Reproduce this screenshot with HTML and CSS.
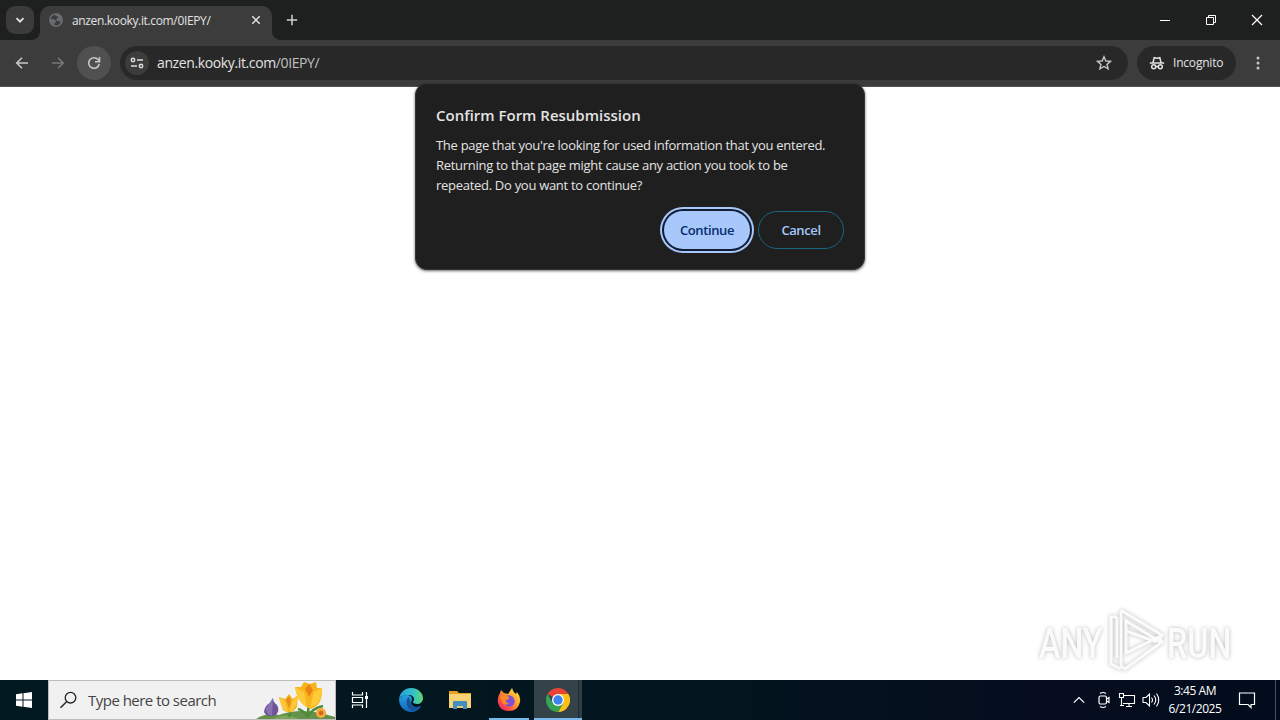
FILE: index.html
```html
<!DOCTYPE html>
<html lang="en">
<head>
    <meta charset="UTF-8">
    <meta name="viewport" content="width=device-width, initial-scale=1.0">
    <title>anzen.kooky.it.com/0IEPY/</title>
    <link rel="stylesheet" href="styles.css">
</head>
<body>
    <header class="tab-strip">
        <button class="tab-search">
            <svg width="10" height="10" viewBox="0 0 10 10"><path d="M1.5 3.2 5 6.7 8.5 3.2" fill="none" stroke="#e3e3e3" stroke-width="1.8"/></svg>
        </button>
        <div class="tab">
            <svg class="globe" width="14" height="14" viewBox="0 0 14 14">
                <circle cx="7" cy="7" r="6.2" fill="#3c3c3c" stroke="#686c72" stroke-width="1.5"/>
                <path d="M1 6h4l2 2v1.5H5.5V13C3 12.5 1 10 1 6zM7 1l4 1 2 4-1 4-2-2H8L7 6l2-1V3.500L6 3z" fill="#686c72"/>
            </svg>
            <span class="tab-title">anzen.kooky.it.com/0IEPY/</span>
            <svg class="tab-close" width="10" height="10" viewBox="0 0 10 10"><path d="M1.3 1.3 8.7 8.7M8.7 1.3 1.3 8.7" stroke="#e3e3e3" stroke-width="1.5"/></svg>
        </div>
        <svg class="new-tab" width="12" height="12" viewBox="0 0 12 12"><path d="M6 .8v10.4M.8 6h10.400" stroke="#d0d0d0" stroke-width="1.5"/></svg>
        <div class="window-controls">
            <span><svg width="12" height="12" viewBox="0 0 12 12"><path d="M1 6.500h10" stroke="#fff"/></svg></span>
            <span><svg width="12" height="12" viewBox="0 0 12 12"><path d="M1.500 3.500h7v7h-7zM3.500 3.500v-2h7v7h-2" fill="none" stroke="#fff"/></svg></span>
            <span><svg width="12" height="12" viewBox="0 0 12 12"><path d="M1 1l10 10M11 1 1 11" stroke="#fff" stroke-width="1.2"/></svg></span>
        </div>
    </header>
    <nav class="toolbar">
        <button class="nav-button">
            <svg width="14" height="14" viewBox="0 0 14 14"><path d="M13 7H2M7 1.700 1.700 7 7 12.300" fill="none" stroke="#c7c7c7" stroke-width="1.6"/></svg>
        </button>
        <button class="nav-button">
            <svg width="14" height="14" viewBox="0 0 14 14"><path d="M1 7h11M7 1.700 12.300 7 7 12.300" fill="none" stroke="#777" stroke-width="1.6"/></svg>
        </button>
        <button class="nav-button reload">
            <svg width="14" height="14" viewBox="0 0 14 14"><path d="M12.200 8A5.300 5.300 0 1 1 11 3.500L12.400 5" fill="none" stroke="#c7c7c7" stroke-width="1.6"/><path d="M12.500 1v4.700H8" fill="none" stroke="#c7c7c7" stroke-width="1.6"/></svg>
        </button>
        <div class="omnibox">
            <span class="site-info">
                <svg width="14" height="12" viewBox="0 0 14 12"><g fill="none" stroke="#dcdcdc" stroke-width="1.5"><circle cx="3" cy="3" r="1.7"/><path d="M7 3h6M1 9h6"/><circle cx="11" cy="9" r="1.7"/></g></svg>
            </span>
            <span class="url">anzen.kooky.it.com<span class="path">/0IEPY/</span></span>
            <svg class="star" width="16" height="16" viewBox="0 0 16 16"><path d="M8 1.800l1.900 4.200 4.600.4-3.500 3 1.100 4.500L8 11.500l-4.100 2.400L5 9.400l-3.500-3 4.600-.4z" fill="none" stroke="#c7c7c7" stroke-width="1.4"/></svg>
        </div>
        <div class="incognito">
            <svg width="16" height="14" viewBox="0 0 16 14">
                <g fill="none" stroke="#e3e3e3" stroke-width="1.5"><path d="M4 6.500 5.200 1.700l2.800.6 2.800-.6L12 6.500M.8 7h14.400"/><circle cx="4.700" cy="10.800" r="2"/><circle cx="11.300" cy="10.800" r="2"/><path d="M6.700 10.500h2.600"/></g>
            </svg>
            <span>Incognito</span>
        </div>
        <svg class="menu-dots" width="4" height="14" viewBox="0 0 4 14"><g fill="#c7c7c7"><circle cx="2" cy="2" r="1.5"/><circle cx="2" cy="7" r="1.5"/><circle cx="2" cy="12" r="1.5"/></g></svg>
    </nav>

    <main class="page">
        <div class="watermark">
            <svg width="210" height="80" viewBox="0 0 210 80">
                <g class="mark-text">
                    <text transform="translate(9 58) scale(.75 1)">ANY</text>
                    <text transform="translate(137 58) scale(.75 1)">RUN</text>
                </g>
                <g class="mark-play">
                    <path d="M92 11 132 35 129 41 96 21V53L129 37 132 42 95 69 91 66V12z"/>
                    <path d="M87 17H81V64L91 69M87 17V58M96 31 127 42"/>
                </g>
            </svg>
        </div>
    </main>

    <section class="dialog">
        <h1>Confirm Form Resubmission</h1>
        <p>The page that you're looking for used information that you entered.<br>
            Returning to that page might cause any action you took to be<br>
            repeated. Do you want to continue?</p>
        <div class="dialog-buttons">
            <button class="continue">Continue</button>
            <button class="cancel">Cancel</button>
        </div>
    </section>

    <footer class="taskbar">
        <div class="start">
            <svg width="16" height="16" viewBox="0 0 16 16"><path d="M0 2.300 6.500 1.300V7.500H0zM7.500 1.200 16 0v7.500H7.500zM0 8.500h6.500v6.200L0 13.800zM7.500 8.500H16V16l-8.500-1.200z" fill="#fff"/></svg>
        </div>
        <div class="search">
            <svg width="18" height="18" viewBox="0 0 18 18"><circle cx="10.500" cy="6.700" r="5.300" fill="none" stroke="#222" stroke-width="1.3"/><path d="M6.800 10.500.5 16.700" stroke="#222" stroke-width="1.4"/></svg>
            <span>Type here to search</span>
            <svg class="flowers" width="80" height="38" viewBox="0 0 80 38">
                <path d="M1 38Q12 31 24 34 48 25 80 36V38z" fill="#66914b"/>
                <path d="M18 38Q30 31 45 38z" fill="#7ba559"/>
                <path d="M34 36Q36 31 34 27M53 36Q53 29 54 23M52 36Q58 27 68 25M53 36Q48 29 43 28" fill="none" stroke="#4d8b3a" stroke-width="2.5"/>
                <path d="M18 17Q18 21 22 24 26 31 19 35 11 36 9 31 10 24 15 22z" fill="#6c5496"/>
                <path d="M18 17 17 35Q10 33 11 27z" fill="#8872b0"/>
                <path d="M24 16 30 18 34 13 38 18 43 14 42 26Q36 35 28 29z" fill="#f4b51f"/>
                <path d="M24 16 30 20 33 31Q25 27 24 16zM43 14 37 21 35 31Q43 26 43 14z" fill="#ffc83c"/>
                <path d="M31 19 34 15 36 20 34 27z" fill="#e98b16"/>
                <path d="M40 6 46 6 49 1 55 3 61 1 62 7 67 7Q68 24 56 28 43 24 40 6z" fill="#f8b41c"/>
                <path d="M40 6 49 11 52 26Q42 21 40 6zM67 7 59 11 55 27Q68 22 67 7z" fill="#ffca38"/>
                <path d="M50 8 54 3 58 9 54 16z" fill="#ea8419"/>
                <circle cx="66" cy="32" r="5" fill="#f5a936"/><circle cx="66" cy="32" r="2.3" fill="#cf681e"/>
            </svg>
        </div>
        <div class="task-view">
            <svg width="18" height="18" viewBox="0 0 18 18"><g fill="none" stroke="#fff" stroke-width="1.2"><path d="M1.500 1v3h10V1M1.500 6.500h10v5h-10zM1.500 17v-3h10v3M15.500 1v16"/></g><path d="M14 5h3v3h-3z" fill="#fff"/></svg>
        </div>
        <div class="app edge">
            <svg width="26" height="26" viewBox="0 0 26 26">
                <defs>
                    <linearGradient id="edgeTop" x1="0" x2="1"><stop offset="0" stop-color="#249fe0"/><stop offset=".6" stop-color="#35c0c9"/><stop offset="1" stop-color="#64d66b"/></linearGradient>
                    <linearGradient id="edgeSide" x1="0" y1="0" x2="0" y2="1"><stop offset="0" stop-color="#249fe0"/><stop offset="1" stop-color="#1464bb"/></linearGradient>
                </defs>
                <path d="M1 12C1 20 7 25 13 25c4 0 8-2 10-6-4 2-8 1-9-1-2-3 0-4 0-6 0-3-3-4-5-4-4 0-7 2-8 4z" fill="url(#edgeSide)"/>
                <path d="M1 12C2 5 7 1 13 1c7 0 12 5 12 10 0 4-3 6-6 6-2 0-4-1-4-2 0-1 1-1 1-3 0-2-2-4-5-4-5 0-9 1-10 4z" fill="url(#edgeTop)"/>
                <path d="M11 10c-4 3-3 11 3 14 4 0 8-3 9-5-4 2-8 1-10-2-1-2-1-4-2-7z" fill="#155298"/>
            </svg>
        </div>
        <div class="app">
            <svg width="22" height="20" viewBox="0 0 22 20">
                <path d="M0 1h8l2 2h12v4H0z" fill="#e5a323"/><path d="M0 4h22v14H0z" fill="#f8d373"/><path d="M4 19v-7q0-1 1-1h12q1 0 1 1v7h-4v-3H8v3z" fill="#438fbd"/><path d="M8 16h6v3H8z" fill="#03151e"/><path d="M8 16h6v2H8z" fill="#e8c871"/>
            </svg>
        </div>
        <div class="app running">
            <svg width="24" height="24" viewBox="0 0 24 24">
                <defs><linearGradient id="fox" x1="1" y1="0" x2="0" y2="1"><stop stop-color="#fff04b"/><stop offset=".4" stop-color="#ffa42c"/><stop offset=".72" stop-color="#ff4b43"/><stop offset="1" stop-color="#e31587"/></linearGradient></defs>
                <path d="M3 5 4 2 7 5 11 6 15 0Q16 4 19 6L20 4Q24 9 23 14 21 23 12 23 3 23 1 15 0 9 3 5z" fill="url(#fox)"/>
                <path d="M9 8Q13 6 16 9 20 15 15 18 9 20 7 15z" fill="#7d50d9"/>
                <path d="M3 9Q7 6 12 9L12 11 9 12Q8 15 12 15 10 18 6 16z" fill="#ff8a25"/>
            </svg>
        </div>
        <div class="app running active">
            <svg width="24" height="24" viewBox="0 0 24 24">
                <path d="M12 12 1.600 6A12 12 0 0 1 22.400 6z" fill="#e94335"/>
                <path d="M12 6h10.400A12 12 0 0 1 12 24l5.200-9z" fill="#fbc116"/>
                <path d="M6.800 15 1.600 6A12 12 0 0 0 12 24l5.200-9z" fill="#34a353"/>
                <circle cx="12" cy="12" r="6" fill="#fff"/><circle cx="12" cy="12" r="4.7" fill="#3e82ed"/>
            </svg>
        </div>
        <div class="tray">
            <svg class="chevron" width="12" height="8" viewBox="0 0 12 8"><path d="M.8 6.700 6 1.500l5.200 5.200" fill="none" stroke="#fff" stroke-width="1.2"/></svg>
            <svg class="meet" width="14" height="18" viewBox="0 0 14 18"><g fill="none" stroke="#fff" stroke-width="1.2"><rect x="2" y="5" width="7.5" height="8" rx="1.5"/><path d="M9.500 8 12 6.500v5L9.500 10M3 2.500Q6 .5 9 2.500M3 15.500Q6 17.500 9 15.500"/></g></svg>
            <svg class="network" width="18" height="16" viewBox="0 0 18 16"><g fill="none" stroke="#fff" stroke-width="1.1"><path d="M6 3.500h10.500v8H5M8 14.500h6M11 11.500v3M1.500 1.500h4v4h-4zM3.500 5.500v8M2 13.500h4"/></g></svg>
            <svg class="sound" width="18" height="16" viewBox="0 0 18 16"><g fill="none" stroke="#fff" stroke-width="1.1"><path d="M1 5.500h3L7.500 2v12L4 10.500H1zM9.500 5.500q2 2.500 0 5M12 3.500q3.500 4.500 0 9M14.500 1.500q4.500 6.500 0 13"/></g></svg>
            <div class="clock"><span>3:45 AM</span><span>6/21/2025</span></div>
            <svg class="notice" width="18" height="18" viewBox="0 0 18 18"><path d="M1.500 2h15v11.500h-3.500v3L10 13.500H1.500z" fill="none" stroke="#fff" stroke-width="1.2"/></svg>
        </div>
        <div class="show-desktop"></div>
    </footer>
</body>
</html>
```

FILE: styles.css
```css
* {
    margin: 0;
    padding: 0;
    box-sizing: border-box;
}
body {
    display: flex;
    flex-direction: column;
    width: 1280px;
    height: 720px;
    overflow: hidden;
    position: relative;
    background-color: #fff;
    font-family: "Open Sans", "Noto Sans", sans-serif;
}
svg {
    display: block;
    flex-shrink: 0;
}
button {
    border: none;
    font-family: inherit;
}
.tab-strip {
    height: 40px;
    background-color: #1e201f;
    display: flex;
    align-items: center;
    padding-left: 6px;
}
.tab-search {
    width: 28px;
    height: 28px;
    border-radius: 9px;
    background-color: #3b3b3b;
    display: flex;
    align-items: center;
    justify-content: center;
}
.tab {
    align-self: flex-end;
    width: 232px;
    height: 34px;
    margin-left: 6px;
    padding: 0 11px 6px 9px;
    border-radius: 10px 10px 0 0;
    background-color: #3c3c3c;
    display: flex;
    align-items: center;
    position: relative;
}
.tab::before,
.tab::after {
    content: "";
    position: absolute;
    bottom: 0;
    width: 8px;
    height: 8px;
}
.tab::before {
    left: -8px;
    background: radial-gradient(circle at 0 0, transparent 7.5px, #3c3c3c 8px);
}
.tab::after {
    right: -8px;
    background: radial-gradient(circle at 100% 0, transparent 7.5px, #3c3c3c 8px);
}
.tab-title {
    margin-left: 9px;
    padding-top: 1px;
    flex: 1;
    color: #e3e3e3;
    font-size: 12px;
    line-height: 16px;
    letter-spacing: -0.35px;
    white-space: nowrap;
}
.new-tab {
    margin-left: 14px;
}
.window-controls {
    margin-left: auto;
    display: flex;
}
.window-controls span {
    width: 46px;
    height: 40px;
    display: flex;
    align-items: center;
    justify-content: center;
}
.toolbar {
    height: 47px;
    padding: 0 0 1px 5px;
    background-color: #3c3c3c;
    border-bottom: 1px solid #515151;
    display: flex;
    align-items: center;
}
.nav-button {
    width: 34px;
    height: 34px;
    margin-right: 2px;
    border-radius: 50%;
    background-color: transparent;
    display: flex;
    align-items: center;
    justify-content: center;
}
.reload {
    background-color: #505050;
    margin-right: 9px;
}
.omnibox {
    width: 1008px;
    height: 34px;
    padding: 0 16px 0 5px;
    border-radius: 17px;
    background-color: #282828;
    display: flex;
    align-items: center;
}
.site-info {
    width: 24px;
    height: 24px;
    border-radius: 50%;
    background-color: #3c3c3c;
    display: flex;
    align-items: center;
    justify-content: center;
}
.url {
    flex: 1;
    margin-left: 8px;
    color: #e3e3e3;
    font-size: 14px;
    letter-spacing: -0.38px;
}
.path {
    color: #c0c0c0;
}
.incognito {
    width: 99px;
    height: 34px;
    margin-left: 9px;
    padding-left: 12px;
    border-radius: 17px;
    background-color: #282828;
    color: #e3e3e3;
    display: flex;
    align-items: center;
    gap: 8px;
    font-size: 12px;
    letter-spacing: -0.2px;
}
.menu-dots {
    margin-left: 20px;
}
.page {
    flex: 1;
    position: relative;
}
.watermark {
    position: absolute;
    right: 40px;
    bottom: 0;
    filter: drop-shadow(0 0 2px #bbb);
}
.mark-text {
    font-family: Roboto, sans-serif;
    font-size: 43px;
    font-weight: 500;
    fill: #fbfbfb;
}
.mark-play {
    fill: none;
    stroke: #fbfbfb;
    stroke-width: 3;
}
.dialog {
    position: absolute;
    top: 83px;
    left: 415px;
    width: 450px;
    height: 187px;
    padding: 20px 20px 0;
    border: 1px solid #343434;
    border-radius: 12px;
    background-color: #1f1f1f;
    box-shadow: 0 1px 3px rgba(0, 0, 0, 0.6);
    color: #e3e3e3;
}
.dialog h1 {
    font-size: 15px;
    line-height: 22px;
    font-weight: 600;
    letter-spacing: 0;
}
.dialog p {
    margin-top: 9px;
    font-size: 13px;
    line-height: 20px;
    letter-spacing: -0.29px;
    white-space: nowrap;
}
.dialog-buttons {
    display: flex;
    justify-content: flex-end;
    gap: 8px;
    margin-top: 16px;
}
.dialog-buttons button {
    height: 38px;
    border-radius: 19px;
    font-size: 13px;
    font-weight: 600;
    letter-spacing: -0.4px;
}
.continue {
    width: 86px;
    background-color: #a8c7fa;
    color: #062e6f;
    box-shadow: 0 0 0 2px #101d35, 0 0 0 4px #a8c7fa;
}
.dialog-buttons .cancel {
    width: 86px;
    border: 1px solid #176581;
    background-color: transparent;
    color: #a8c7fa;
}
.taskbar {
    height: 40px;
    background: linear-gradient(90deg, #021920 0%, #03151e 55%, #050d1e 80%, #030c1c 100%);
    display: flex;
}
.start,
.task-view,
.app {
    width: 48px;
    display: flex;
    align-items: center;
    justify-content: center;
}
.search {
    width: 288px;
    padding-left: 11px;
    border: 1px solid #bcbcbc;
    background-color: #f1f1f1;
    color: #444;
    display: flex;
    align-items: center;
    font-size: 15px;
    letter-spacing: -0.52px;
}
.search span {
    margin-left: 10px;
    white-space: nowrap;
}
.flowers {
    margin-left: auto;
}
.app {
    margin-left: 1px;
}
.edge {
    margin-left: 3px;
}
.running {
    border-bottom: 2px solid #76b9ed;
    padding-top: 2px;
    width: 40px;
    margin: 0 4px 0 5px;
}
.active {
    width: 48px;
    margin: 0 0 0 1px;
    background: linear-gradient(90deg, #344349 44px, #1c2b32 44px, #1c2b32 45px, #2f3e44 45px);
}
.tray {
    margin-left: auto;
    display: flex;
    align-items: center;
}
.meet {
    margin-left: 12px;
}
.network {
    margin-left: 7px;
}
.sound {
    margin-left: 6px;
}
.clock {
    width: 54px;
    margin-left: 8px;
    color: #fff;
    display: flex;
    flex-direction: column;
    align-items: center;
    font-size: 12px;
    line-height: 18px;
    letter-spacing: -0.45px;
    white-space: nowrap;
}
.notice {
    margin-left: 16px;
}
.show-desktop {
    width: 5px;
    margin-left: 19px;
    border-left: 1px solid #48525d;
}
```
